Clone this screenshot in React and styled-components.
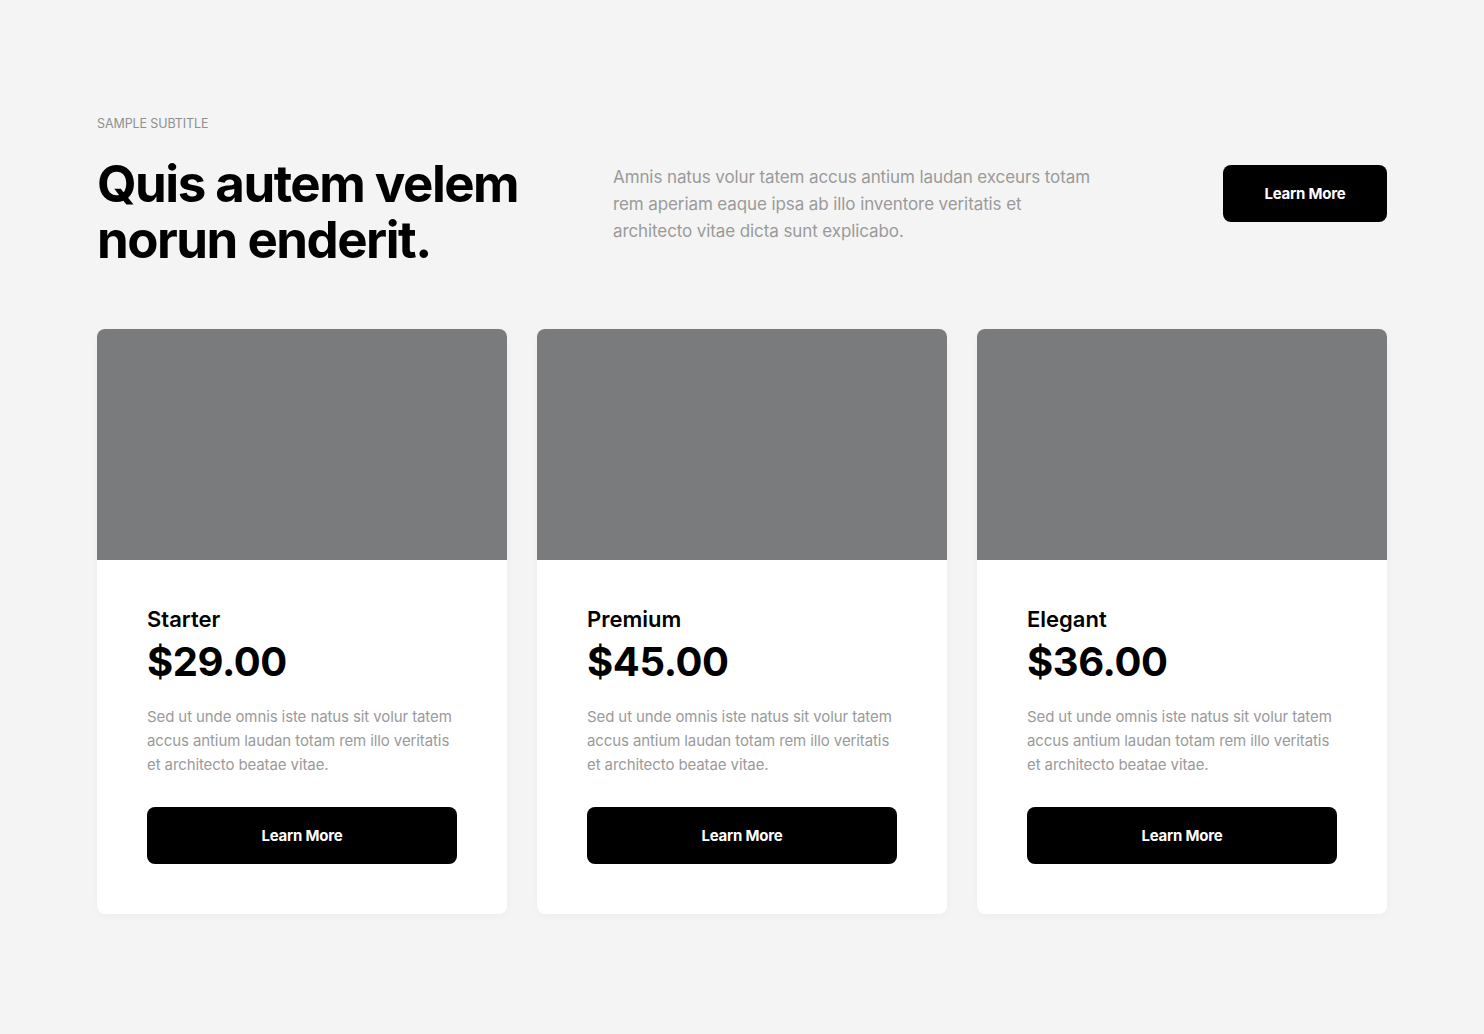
import styled, { createGlobalStyle } from "styled-components";

const GlobalStyle = createGlobalStyle`
    * { box-sizing: border-box; }
    body {
        margin: 0;
        background: #f4f4f4;
        font-family: Inter, "Noto Sans", sans-serif;
        color: #000;
    }
`;

const Page = styled.div`
    min-height: 100vh;
    padding: 116px 97px 120px;
`;

const Subtitle = styled.p`
    margin: 0 0 24px;
    font-size: 12.5px;
    line-height: 16px;
    color: #8f8f8f;
    text-transform: uppercase;
    letter-spacing: -0.1px;
`;

const HeaderRow = styled.div`
    display: flex;
    align-items: flex-start;
`;

const Title = styled.h1`
    margin: 0;
    width: 516px;
    font-size: 51px;
    line-height: 56px;
    font-weight: 700;
    letter-spacing: -1.5px;
`;

const Lead = styled.p`
    margin: 8px 0 0;
    width: 490px;
    font-size: 17px;
    line-height: 27px;
    color: #9a9a9a;
    letter-spacing: -0.1px;
`;

const Button = styled.button`
    display: flex;
    align-items: center;
    justify-content: center;
    height: 57px;
    width: ${(p) => (p.$wide ? "100%" : "164px")};
    border: 0;
    border-radius: 8px;
    background: #000;
    color: #fff;
    font-family: inherit;
    font-size: 15px;
    font-weight: 700;
    letter-spacing: -0.2px;
    cursor: pointer;
`;

const HeaderAction = styled.div`
    margin-left: auto;
    margin-top: 9px;
`;

const Cards = styled.div`
    display: grid;
    grid-template-columns: repeat(3, 1fr);
    gap: 30px;
    margin-top: 61px;
`;

const Card = styled.div`
    background: #fff;
    border-radius: 8px;
    overflow: hidden;
    box-shadow: 0 2px 10px rgba(0, 0, 0, 0.03);
`;

const Thumb = styled.div`
    height: 231px;
    background: #7a7b7d;
`;

const CardBody = styled.div`
    padding: 45px 50px 50px;
`;

const Plan = styled.h3`
    margin: 0;
    font-size: 22px;
    line-height: 28px;
    font-weight: 600;
    letter-spacing: 0;
`;

const Price = styled.div`
    margin-top: 4px;
    font-size: 40px;
    line-height: 50px;
    font-weight: 700;
    letter-spacing: -0.4px;
`;

const Desc = styled.p`
    margin: 18px 0 30px;
    font-size: 15px;
    line-height: 24px;
    color: #9a9a9a;
    letter-spacing: -0.1px;
`;

const plans = [
    { name: "Starter", price: "$29.00" },
    { name: "Premium", price: "$45.00" },
    { name: "Elegant", price: "$36.00" },
];

export default function App() {
    return (
        <Page>
            <GlobalStyle />
            <Subtitle>Sample subtitle</Subtitle>
            <HeaderRow>
                <Title>Quis autem velem norun enderit.</Title>
                <Lead>
                    Amnis natus volur tatem accus antium laudan exceurs totam rem aperiam eaque
                    ipsa ab illo inventore veritatis et architecto vitae dicta sunt explicabo.
                </Lead>
                <HeaderAction>
                    <Button>Learn More</Button>
                </HeaderAction>
            </HeaderRow>
            <Cards>
                {plans.map((plan) => (
                    <Card key={plan.name}>
                        <Thumb />
                        <CardBody>
                            <Plan>{plan.name}</Plan>
                            <Price>{plan.price}</Price>
                            <Desc>
                                Sed ut unde omnis iste natus sit volur tatem accus antium laudan
                                totam rem illo veritatis et architecto beatae vitae.
                            </Desc>
                            <Button $wide>Learn More</Button>
                        </CardBody>
                    </Card>
                ))}
            </Cards>
        </Page>
    );
}
